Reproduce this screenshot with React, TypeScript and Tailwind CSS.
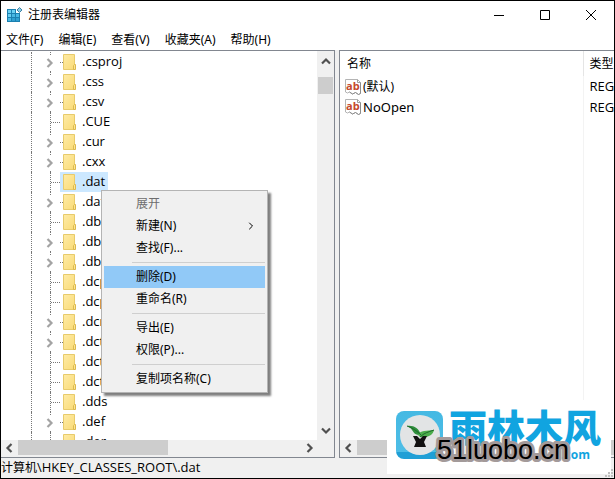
import React, { useState } from 'react';
import { ChevronRight } from 'lucide-react';

type TreeKey = { name: string; expandable?: boolean };

const menus = ['文件(F)', '编辑(E)', '查看(V)', '收藏夹(A)', '帮助(H)'];

const keys: TreeKey[] = [
  { name: '.csproj', expandable: true },
  { name: '.css', expandable: true },
  { name: '.csv', expandable: true },
  { name: '.CUE' },
  { name: '.cur', expandable: true },
  { name: '.cxx', expandable: true },
  { name: '.dat' },
  { name: '.datx', expandable: true },
  { name: '.db' },
  { name: '.dbp', expandable: true },
  { name: '.dbs', expandable: true },
  { name: '.dcp' },
  { name: '.dcpr' },
  { name: '.dcr', expandable: true },
  { name: '.dct', expandable: true },
  { name: '.dctx' },
  { name: '.dctb' },
  { name: '.dds' },
  { name: '.def', expandable: true },
  { name: '.der' },
];

const contextGroups = [
  ['展开', '新建(N)', '查找(F)...'],
  ['删除(D)', '重命名(R)'],
  ['导出(E)', '权限(P)...'],
  ['复制项名称(C)'],
];

const arrows = {
  left: 'M6.500 1L2.500 5l4 4',
  right: 'M2.500 1l4 4-4 4',
  up: 'M1 6.500l4-4 4 4',
  down: 'M1 2.500l4 4 4-4',
};

function Arrow({ dir, className = 'text-[#505050]' }: { dir: keyof typeof arrows; className?: string }) {
  return (
    <svg width="10" height="10" viewBox="0 0 10 10" className={className}>
      <path d={arrows[dir]} fill="none" stroke="currentColor" strokeWidth="2.200" />
    </svg>
  );
}

function RegeditIcon() {
  return (
    <svg width="16" height="16" viewBox="0 0 16 16" className="shrink-0">
      <path d="M0 2h9v4h4v9H0z" fill="#1b80b0" />
      <path d="M1 3h3v3H1zM5 3h3v3H5zM1 7h3v3H1z" fill="#6ad0f3" />
      <path d="M5 7h3v3H5zM9 7h3v3H9zM1 11h3v3H1z" fill="#48b8e4" />
      <path d="M5 11h3v3H5zM9 11h3v3H9z" fill="#2f9fd0" />
      <path d="M12.500.5l2.500 2.500-2.500 2.500L10 3z" fill="#8ccbe4" stroke="#3d83a5" />
    </svg>
  );
}

function FolderIcon() {
  return (
    <svg width="14" height="16" viewBox="0 0 14 16" className="shrink-0">
      <defs>
        <linearGradient id="folder" x1="0" y1="0" x2="1" y2="1">
          <stop offset="0" stopColor="#feeba6" />
          <stop offset="1" stopColor="#fadb77" />
        </linearGradient>
      </defs>
      <path d="M.5.5h11v15H.5z" fill="url(#folder)" stroke="#e8cb6b" />
      <path d="M10.500 15.500v-4l1-1h1v5z" fill="#fde590" stroke="#dcb94f" />
    </svg>
  );
}

function StringIcon() {
  return (
    <svg width="16" height="16" viewBox="0 0 16 16" className="shrink-0">
      <path d="M.5.5h12l3 3v11l-2 1-3-2-3 1.500-3-2-2 1-2-1z" fill="#fff" stroke="#b4b4b4" />
      <path d="M15.500 3.500v11l-2 1-3-2-3 1.500-3-2" fill="none" stroke="#8d8d8d" />
      <path d="M12.500.5v3h3" fill="none" stroke="#a0a0a0" />
      <text x="1" y="11" fontSize="11" fontWeight="bold" fontFamily="Open Sans, sans-serif" fill="#c5492d">
        ab
      </text>
    </svg>
  );
}

function TreeRow({ item, selected, onSelect }: { item: TreeKey; selected: boolean; onSelect: () => void }) {
  return (
    <li className="flex h-5 items-center">
      <span className="ml-[30px] h-5 border-l border-dotted border-[#777]" />
      {item.expandable ? (
        <span className="ml-[13px] flex h-5 w-[27px] items-center">
          <span className="flex h-5 w-2.5 flex-col items-center justify-between">
            <span className="h-[3px] border-l border-dotted border-[#777]" />
            <Arrow dir="right" className="text-[#a3a3a3]" />
            <span className="h-px border-l border-dotted border-[#777]" />
          </span>
          <span className="ml-[5px] w-[3px] border-t border-dotted border-[#777]" />
        </span>
      ) : (
        <span className="ml-[18px] flex h-5 w-[22px] items-center border-l border-dotted border-[#777]">
          <span className="w-[9px] border-t border-dotted border-[#777]" />
        </span>
      )}
      <button
        onClick={onSelect}
        className={`-ml-3 flex h-5 items-center gap-[5px] px-[3px] font-['Open_Sans',sans-serif] text-[13px] ${
          selected ? 'bg-[#cce8ff]' : ''
        }`}
      >
        <FolderIcon />
        <span>{item.name}</span>
      </button>
    </li>
  );
}

function HorizontalScroll({ full }: { full?: boolean }) {
  return (
    <div className="flex h-[17px] items-start bg-[#f0f0f0]">
      <button aria-label="Scroll left" className="flex h-[15px] w-[17px] items-center justify-center">
        <Arrow dir="left" />
      </button>
      {full ? (
        <div className="h-[15px] flex-1 bg-[#cdcdcd]" />
      ) : (
        <>
          <div className="h-[15px] w-[45%] bg-[#cdcdcd]" />
          <button aria-label="Scroll right" className="ml-auto mr-4 flex h-[15px] w-[17px] items-center justify-center">
            <Arrow dir="right" />
          </button>
        </>
      )}
    </div>
  );
}

function ContextMenu() {
  return (
    <div className="absolute left-[100px] top-[189px] w-[167px] border border-[#b4b4b4] bg-[#f0f0f0] p-0.5 shadow-[3px_3px_2px_rgba(0,0,0,0.5)]">
      {contextGroups.map((group, idx) => (
        <div key={idx}>
          {idx > 0 && <div className="my-[3px] ml-7 border-t border-[#cfcfcf]" />}
          {group.map((label) => (
            <button
              key={label}
              disabled={label === '展开'}
              className={`flex h-[22px] w-full items-center pl-8 pr-2 text-xs disabled:text-[#6d6d6d] ${
                label === '删除(D)' ? 'bg-[#91c9f7]' : ''
              }`}
            >
              {label}
              {label === '新建(N)' && <ChevronRight size={12} strokeWidth={2} className="ml-auto" />}
            </button>
          ))}
        </div>
      ))}
    </div>
  );
}

function Watermark() {
  return (
    <svg width="224" height="74" viewBox="0 0 224 74" className="absolute bottom-1 right-[3px]">
      <defs>
        <linearGradient id="tile" x1="0" y1="0" x2="0" y2="1">
          <stop offset="0" stopColor="#45b9e3" />
          <stop offset="0.850" stopColor="#4dbde6" />
          <stop offset="0.860" stopColor="#1f9fd6" />
          <stop offset="1" stopColor="#1f9fd6" />
        </linearGradient>
      </defs>
      <rect width="224" height="74" fill="#fff" />
      <rect x="9" y="11" width="47" height="48" rx="8" fill="url(#tile)" />
      <circle cx="33" cy="35" r="20" fill="#e2e4e5" />
      <path d="M20 26c6-1 12 2 14 9-6 0-7-2-9-5-1-2-3-3-5-4z" fill="#2f8f3c" />
      <path d="M31 35c2-5 9-4 16-5-1 5-6 8-14 7z" fill="#4cae4c" />
      <path d="M20 26c6 2 10 5 14 9M47 30c-6 2-10 3-14 7" fill="none" stroke="#1d6b2b" />
      <path d="M26 36h4l3 3 3-3h4l-3 6 2 5H27l2-5z" fill="#111" />
      <text x="62" y="42" fontSize="38" fontWeight="900" fontFamily="Noto Sans CJK SC, sans-serif" fill="#11a4e0">
        雨林木风
      </text>
      <text x="203" y="59" textAnchor="end" fontSize="12" fontWeight="bold" fontFamily="Open Sans, sans-serif" fill="#11a4e0">
        .com
      </text>
      <text x="50" y="59" fontSize="27" fontFamily="Liberation Sans, sans-serif" fill="#000" stroke="#a39a9a" strokeWidth="6" strokeLinejoin="round" paintOrder="stroke">
        51luobo.cn
      </text>
    </svg>
  );
}

export default function App() {
  const [selected, setSelected] = useState('.dat');

  return (
    <div className="relative flex h-screen flex-col overflow-hidden border border-black bg-white font-['Noto_Sans','Noto_Sans_CJK_SC',sans-serif] text-xs text-black">
      {/* Title bar */}
      <header className="flex h-7 shrink-0 items-center pl-1.5">
        <RegeditIcon />
        <h1 className="ml-[5px]">注册表编辑器</h1>
        <div className="ml-auto flex">
          <button aria-label="Minimize" className="flex h-7 w-[46px] items-center justify-center">
            <svg width="10" height="10"><path d="M0 5.500h10" stroke="#000" /></svg>
          </button>
          <button aria-label="Maximize" className="flex h-7 w-[46px] items-center justify-center">
            <svg width="10" height="10"><path d="M.5.5h9v9h-9z" fill="none" stroke="#000" /></svg>
          </button>
          <button aria-label="Close" className="flex h-7 w-[46px] items-center justify-center">
            <svg width="10" height="10"><path d="M0 0l10 10M10 0L0 10" stroke="#000" /></svg>
          </button>
        </div>
      </header>

      {/* Menu bar */}
      <nav className="flex h-[21px] shrink-0 items-center gap-[15px] pl-[5px]">
        {menus.map((menu) => (
          <button key={menu}>{menu}</button>
        ))}
      </nav>

      <main className="flex min-h-0 flex-1 bg-[#f0f0f0]">
        {/* Key tree */}
        <section className="flex w-[334px] shrink-0 flex-col border-y border-r border-[#828790] bg-white">
          <div className="flex min-h-0 flex-1">
            <ul className="min-h-0 flex-1 overflow-hidden pt-px">
              {keys.map((item) => (
                <TreeRow
                  key={item.name}
                  item={item}
                  selected={item.name === selected}
                  onSelect={() => setSelected(item.name)}
                />
              ))}
            </ul>
            <div className="flex w-[17px] flex-col items-center bg-[#f0f0f0]">
              <button aria-label="Scroll up" className="flex h-[26px] items-center pb-1">
                <Arrow dir="up" />
              </button>
              <div className="h-[17px] w-[15px] bg-[#cdcdcd]" />
              <button aria-label="Scroll down" className="mt-auto flex h-[18px] items-center">
                <Arrow dir="down" />
              </button>
            </div>
          </div>
          <HorizontalScroll />
        </section>

        {/* Values */}
        <section className="ml-1 flex min-w-0 flex-1 flex-col border-y border-l border-[#828790] bg-white">
          <div className="flex min-h-0 flex-1">
            <table className="h-full w-full table-fixed whitespace-nowrap text-left">
              <thead>
                <tr className="h-[25px]">
                  <th className="border-r border-[#e5e5e5] pl-[7px] font-normal">名称</th>
                  <th className="w-[31px] pl-1.5 font-normal">类型</th>
                </tr>
              </thead>
              <tbody>
                {['(默认)', 'NoOpen'].map((name) => (
                  <tr key={name} className="h-[21px]">
                    <td className="border-r border-[#f3f3f3] pl-[5px]">
                      <span className="flex items-center gap-0.5">
                        <StringIcon />
                        <span className={name === 'NoOpen' ? 'text-[13px]' : ''}>{name}</span>
                      </span>
                    </td>
                    <td className="overflow-hidden pl-1.5 font-['Open_Sans',sans-serif] text-[13px]">REG</td>
                  </tr>
                ))}
                <tr>
                  <td className="border-r border-[#f3f3f3]" />
                  <td />
                </tr>
              </tbody>
            </table>
          </div>
          <HorizontalScroll full />
        </section>
      </main>

      {/* Status bar */}
      <footer className="flex h-5 shrink-0 items-center bg-[#f0f0f0] pb-px">
        计算机<span className="font-['Open_Sans',sans-serif] text-[13px]">\HKEY_CLASSES_ROOT\.dat</span>
      </footer>

      <ContextMenu />
      <Watermark />

      {/* Resize grip */}
      <svg width="10" height="10" viewBox="0 0 10 10" className="absolute bottom-0 right-0">
        <path d="M7 1h2v2H7zM4 4h2v2H4zM7 4h2v2H7zM1 7h2v2H1zM4 7h2v2H4zM7 7h2v2H7z" fill="#bfbfbf" />
      </svg>
    </div>
  );
}
